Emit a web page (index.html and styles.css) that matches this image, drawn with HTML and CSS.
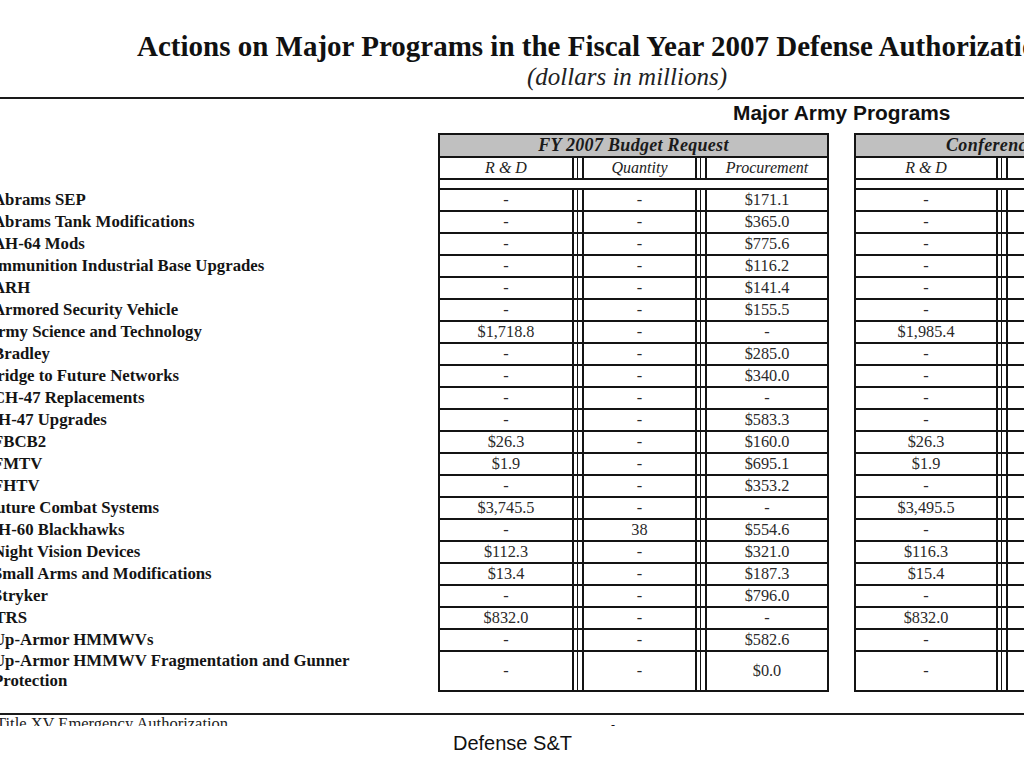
FILE: index.html
```html
<!DOCTYPE html>
<html lang="en">
<head>
<meta charset="utf-8">
<title>Actions on Major Programs in the Fiscal Year 2007 Defense Authorization</title>
<link rel="stylesheet" href="styles.css">
</head>
<body>
<div class="page">
  <header class="head">
    <h1 class="title">Actions on Major Programs in the Fiscal Year 2007 Defense Authorization Act</h1>
    <p class="subtitle">(dollars in millions)</p>
  </header>
  <main class="doc">
    <h2 class="section">Major Army Programs</h2>
    <table class="grid">
      <colgroup>
        <col class="c-label"><col class="c-rd"><col class="c-sep"><col class="c-qty"><col class="c-sep"><col class="c-proc">
        <col class="c-gap"><col class="c-rd2"><col class="c-sep"><col class="c-qty"><col class="c-sep"><col class="c-proc">
      </colgroup>
      <tr class="r-group">
        <td class="lbl"></td>
        <th class="group" colspan="5">FY 2007 Budget Request</th>
        <td class="gap"></td>
        <th class="group group2" colspan="5">Conference</th>
      </tr>
      <tr class="r-sub">
        <td class="lbl"></td>
        <th class="sub">R &amp; D</th><td class="sep"></td><th class="sub">Quantity</th><td class="sep"></td><th class="sub">Procurement</th>
        <td class="gap"></td>
        <th class="sub">R &amp; D</th><td class="sep"></td><th class="sub">Quantity</th><td class="sep"></td><th class="sub">Procurement</th>
      </tr>
      <tr class="r-space">
        <td class="lbl"></td>
        <td class="space" colspan="5"></td>
        <td class="gap"></td>
        <td class="space" colspan="5"></td>
      </tr>
      <tr><td class="lbl">Abrams SEP</td><td>-</td><td class="sep"></td><td>-</td><td class="sep"></td><td>$171.1</td><td class="gap"></td><td>-</td><td class="sep"></td><td>-</td><td class="sep"></td><td>$171.1</td></tr>
      <tr><td class="lbl">Abrams Tank Modifications</td><td>-</td><td class="sep"></td><td>-</td><td class="sep"></td><td>$365.0</td><td class="gap"></td><td>-</td><td class="sep"></td><td>-</td><td class="sep"></td><td>$365.0</td></tr>
      <tr><td class="lbl">AH-64 Mods</td><td>-</td><td class="sep"></td><td>-</td><td class="sep"></td><td>$775.6</td><td class="gap"></td><td>-</td><td class="sep"></td><td>-</td><td class="sep"></td><td>$775.6</td></tr>
      <tr><td class="lbl shift">Ammunition Industrial Base Upgrades</td><td>-</td><td class="sep"></td><td>-</td><td class="sep"></td><td>$116.2</td><td class="gap"></td><td>-</td><td class="sep"></td><td>-</td><td class="sep"></td><td>$116.2</td></tr>
      <tr><td class="lbl">ARH</td><td>-</td><td class="sep"></td><td>-</td><td class="sep"></td><td>$141.4</td><td class="gap"></td><td>-</td><td class="sep"></td><td>-</td><td class="sep"></td><td>$141.4</td></tr>
      <tr><td class="lbl">Armored Security Vehicle</td><td>-</td><td class="sep"></td><td>-</td><td class="sep"></td><td>$155.5</td><td class="gap"></td><td>-</td><td class="sep"></td><td>-</td><td class="sep"></td><td>$155.5</td></tr>
      <tr><td class="lbl shift">Army Science and Technology</td><td>$1,718.8</td><td class="sep"></td><td>-</td><td class="sep"></td><td>-</td><td class="gap"></td><td>$1,985.4</td><td class="sep"></td><td>-</td><td class="sep"></td><td>-</td></tr>
      <tr><td class="lbl">Bradley</td><td>-</td><td class="sep"></td><td>-</td><td class="sep"></td><td>$285.0</td><td class="gap"></td><td>-</td><td class="sep"></td><td>-</td><td class="sep"></td><td>$285.0</td></tr>
      <tr><td class="lbl shift">Bridge to Future Networks</td><td>-</td><td class="sep"></td><td>-</td><td class="sep"></td><td>$340.0</td><td class="gap"></td><td>-</td><td class="sep"></td><td>-</td><td class="sep"></td><td>$340.0</td></tr>
      <tr><td class="lbl">CH-47 Replacements</td><td>-</td><td class="sep"></td><td>-</td><td class="sep"></td><td>-</td><td class="gap"></td><td>-</td><td class="sep"></td><td>-</td><td class="sep"></td><td>-</td></tr>
      <tr><td class="lbl shift">CH-47 Upgrades</td><td>-</td><td class="sep"></td><td>-</td><td class="sep"></td><td>$583.3</td><td class="gap"></td><td>-</td><td class="sep"></td><td>-</td><td class="sep"></td><td>$583.3</td></tr>
      <tr><td class="lbl">FBCB2</td><td>$26.3</td><td class="sep"></td><td>-</td><td class="sep"></td><td>$160.0</td><td class="gap"></td><td>$26.3</td><td class="sep"></td><td>-</td><td class="sep"></td><td>$160.0</td></tr>
      <tr><td class="lbl">FMTV</td><td>$1.9</td><td class="sep"></td><td>-</td><td class="sep"></td><td>$695.1</td><td class="gap"></td><td>$1.9</td><td class="sep"></td><td>-</td><td class="sep"></td><td>$695.1</td></tr>
      <tr><td class="lbl">FHTV</td><td>-</td><td class="sep"></td><td>-</td><td class="sep"></td><td>$353.2</td><td class="gap"></td><td>-</td><td class="sep"></td><td>-</td><td class="sep"></td><td>$353.2</td></tr>
      <tr><td class="lbl shift">Future Combat Systems</td><td>$3,745.5</td><td class="sep"></td><td>-</td><td class="sep"></td><td>-</td><td class="gap"></td><td>$3,495.5</td><td class="sep"></td><td>-</td><td class="sep"></td><td>-</td></tr>
      <tr><td class="lbl shift">UH-60 Blackhawks</td><td>-</td><td class="sep"></td><td>38</td><td class="sep"></td><td>$554.6</td><td class="gap"></td><td>-</td><td class="sep"></td><td>38</td><td class="sep"></td><td>$554.6</td></tr>
      <tr><td class="lbl">Night Vision Devices</td><td>$112.3</td><td class="sep"></td><td>-</td><td class="sep"></td><td>$321.0</td><td class="gap"></td><td>$116.3</td><td class="sep"></td><td>-</td><td class="sep"></td><td>$321.0</td></tr>
      <tr><td class="lbl">Small Arms and Modifications</td><td>$13.4</td><td class="sep"></td><td>-</td><td class="sep"></td><td>$187.3</td><td class="gap"></td><td>$15.4</td><td class="sep"></td><td>-</td><td class="sep"></td><td>$187.3</td></tr>
      <tr><td class="lbl">Stryker</td><td>-</td><td class="sep"></td><td>-</td><td class="sep"></td><td>$796.0</td><td class="gap"></td><td>-</td><td class="sep"></td><td>-</td><td class="sep"></td><td>$796.0</td></tr>
      <tr><td class="lbl shift">JTRS</td><td>$832.0</td><td class="sep"></td><td>-</td><td class="sep"></td><td>-</td><td class="gap"></td><td>$832.0</td><td class="sep"></td><td>-</td><td class="sep"></td><td>-</td></tr>
      <tr><td class="lbl">Up-Armor HMMWVs</td><td>-</td><td class="sep"></td><td>-</td><td class="sep"></td><td>$582.6</td><td class="gap"></td><td>-</td><td class="sep"></td><td>-</td><td class="sep"></td><td>$582.6</td></tr>
      <tr class="r-tall"><td class="lbl"><span class="l1">Up-Armor HMMWV Fragmentation and Gunner</span><br><span class="l2">Protection</span></td><td>-</td><td class="sep"></td><td>-</td><td class="sep"></td><td>$0.0</td><td class="gap"></td><td>-</td><td class="sep"></td><td>-</td><td class="sep"></td><td>$0.0</td></tr>
    </table>
    <div class="rule"></div>
    <p class="next">Title XV Emergency Authorization</p>
  </main>
  <footer class="foot">
    <span class="dash">-</span>
    <span class="foot-text">Defense S&amp;T</span>
  </footer>
</div>
</body>
</html>
```

FILE: styles.css
```css
html, body {
  margin: 0;
  padding: 0;
  background: #ffffff;
}

.page {
  width: 1024px;
  height: 768px;
  overflow: hidden;
  background: #ffffff;
  font-family: "Liberation Serif", "Times New Roman", serif;
  color: #111;
}

.head {
  height: 97px;
  box-sizing: border-box;
  padding-top: 29px;
}

.title {
  margin: 0;
  padding-left: 137px;
  font-size: 29px;
  line-height: 34px;
  font-weight: bold;
  white-space: nowrap;
  color: #111;
}

.subtitle {
  margin: 0;
  padding-left: 527px;
  font-size: 25px;
  line-height: 28px;
  font-style: italic;
  color: #222;
  white-space: nowrap;
}

.doc {
  border-top: 2px solid #1a1a1a;
  height: 627px;
  overflow: hidden;
}

.section {
  margin: 0;
  padding-left: 733px;
  font-family: "Liberation Sans", Arial, sans-serif;
  font-size: 20.9px;
  line-height: 28px;
  height: 34px;
  font-weight: bold;
  color: #111;
  white-space: nowrap;
}

.grid {
  border-collapse: collapse;
  table-layout: fixed;
  margin-left: -7px;
  width: 1259px;
  font-size: 16.3px;
  color: #2a2a2a;
}

.c-label { width: 446px; }
.c-rd { width: 134px; }
.c-rd2 { width: 142px; }
.c-sep { width: 10px; }
.c-qty { width: 113px; }
.c-proc { width: 122px; }
.c-gap { width: 27px; }

.grid td,
.grid th {
  padding: 0;
  text-align: center;
  vertical-align: middle;
  border: 2px solid #141414;
  white-space: nowrap;
  overflow: visible;
}

.grid td.lbl,
.grid td.gap {
  border: none;
}

.grid td.lbl {
  text-align: left;
  font-weight: bold;
  color: #141414;
  font-size: 16.8px;
}

.grid td.lbl.shift {
  text-indent: -7px;
}

.grid tr {
  height: 22px;
}

.r-group {
  height: 24px;
}

.grid th.group {
  background: #c0c0c0;
  font-style: italic;
  font-weight: bold;
  font-size: 18px;
  letter-spacing: 0.3px;
  color: #1a1a1a;
}

.grid th.group2 {
  text-align: left;
  padding-left: 90px;
}

.grid th.sub {
  font-style: italic;
  font-weight: normal;
  font-size: 16px;
  color: #222;
}

.grid tr.r-space {
  height: 10px;
}

.grid td.sep {
  background: linear-gradient(to right, transparent 3px, #141414 3px, #141414 4px, transparent 4px);
}

.grid tr.r-tall {
  height: 40px;
}

.grid tr.r-tall td.lbl {
  line-height: 20px;
}

.rule {
  margin-top: 21px;
  border-top: 2px solid #1a1a1a;
}

.next {
  margin: 0;
  margin-left: -4px;
  font-size: 16.5px;
  line-height: 17px;
  color: #222;
  white-space: nowrap;
}

.foot {
  position: relative;
  height: 43px;
  font-family: "Liberation Sans", Arial, sans-serif;
  color: #111;
}

.dash {
  position: absolute;
  left: 611px;
  top: -6px;
  font-family: "Liberation Serif", serif;
  font-size: 12px;
  line-height: 10px;
}

.foot-text {
  display: block;
  padding-left: 453px;
  padding-top: 5px;
  font-size: 20px;
  line-height: 24px;
}
```
